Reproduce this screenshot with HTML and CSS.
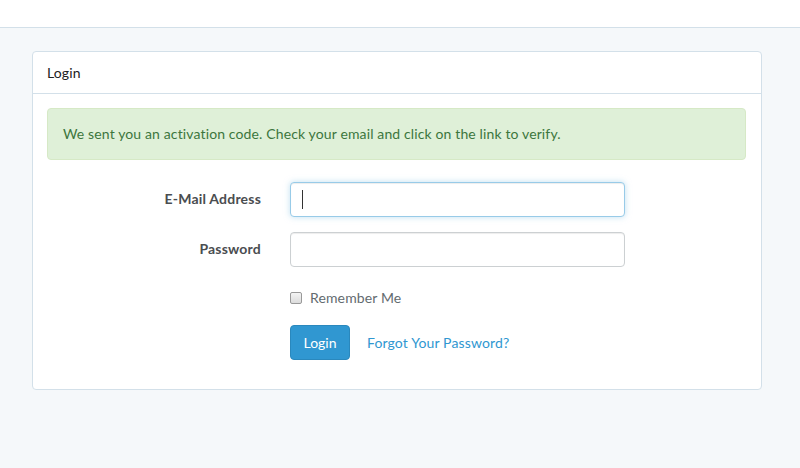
FILE: index.html
```html
<!DOCTYPE html>
<html lang="en">
<head>
<meta charset="utf-8">
<title>Login</title>
<link rel="stylesheet" href="styles.css">
</head>
<body>
<nav class="navbar"></nav>
<main class="container">
  <section class="panel">
    <header class="panel-heading">Login</header>
    <div class="panel-body">
      <div class="alert">We sent you an activation code. Check your email and click on the link to verify.</div>
      <form class="form">
        <div class="form-group">
          <label class="label" for="email">E-Mail Address</label>
          <div class="field">
            <input id="email" class="input input-focus" type="email">
            <span class="caret"></span>
          </div>
        </div>
        <div class="form-group">
          <label class="label" for="password">Password</label>
          <div class="field">
            <input id="password" class="input" type="password">
          </div>
        </div>
        <div class="form-group">
          <span class="label"></span>
          <div class="field check-row">
            <span class="checkbox"></span>
            <span class="check-text">Remember Me</span>
          </div>
        </div>
        <div class="form-group last">
          <span class="label"></span>
          <div class="field actions">
            <button type="button" class="btn">Login</button>
            <a class="link" href="#">Forgot Your Password?</a>
          </div>
        </div>
      </form>
    </div>
  </section>
</main>
</body>
</html>
```
FILE: styles.css
```css
* { box-sizing: border-box; }
html, body {
  margin: 0;
  padding: 0;
  background: #f5f8fa;
  font-family: "Lato", "Open Sans", sans-serif;
  font-size: 14px;
  line-height: 22px;
  letter-spacing: 0.13px;
  color: #636b6f;
}
.navbar {
  height: 28px;
  background: #fff;
  border-bottom: 1px solid #d3e0e9;
}
.container {
  padding: 23px 38px 0 32px;
}
.panel {
  width: 730px;
  background: #fff;
  border: 1px solid #d3e0e9;
  border-radius: 4px;
}
.panel-heading {
  height: 42px;
  padding: 10px 15px 10px 14px;
  color: #222;
  border-bottom: 1px solid #d3e0e9;
}
.panel-body {
  padding: 14px 15px 14px 14px;
}
.alert {
  height: 52px;
  padding: 14px 15px;
  background: #dff0d8;
  border: 1px solid #d6e9c6;
  border-radius: 4px;
  color: #3c763d;
  margin-bottom: 22px;
}
.form-group {
  display: flex;
  align-items: flex-start;
  margin-bottom: 15px;
}
.form-group.last { margin-bottom: 15px; }
.label {
  width: 214px;
  flex: none;
  text-align: right;
  padding-top: 6px;
  font-weight: 700;
  color: #4a4d50;
  letter-spacing: 0.2px;
  margin-right: 29px;
}
.field {
  position: relative;
  width: 335px;
}
.input {
  display: block;
  width: 335px;
  height: 35px;
  margin: 0;
  padding: 6px 12px;
  border: 1px solid #ccd0d2;
  border-radius: 4px;
  background: #fff;
  font: inherit;
  box-shadow: inset 0 1px 1px rgba(0,0,0,.075);
  outline: none;
}
.input-focus {
  border-color: #98cbe8;
  box-shadow: inset 0 1px 1px rgba(0,0,0,.075), 0 0 6px rgba(152,203,232,.6);
}
.caret {
  position: absolute;
  left: 12px;
  top: 8px;
  width: 1px;
  height: 19px;
  background: #333;
}
.check-row {
  display: flex;
  align-items: center;
  height: 28px;
  padding-top: 3px;
}
.checkbox {
  width: 12px;
  height: 12px;
  border: 1px solid #999;
  border-radius: 2px;
  background: linear-gradient(#f4f4f4, #dcdcdc);
  margin-right: 8px;
}
.check-text { color: #636b6f; }
.actions {
  display: flex;
  align-items: center;
}
.btn {
  height: 35px;
  padding: 6px 12px;
  border: 1px solid #2a88bd;
  border-radius: 4px;
  background: #3097d1;
  color: #fff;
  font: inherit;
  width: 60px;
}
.link {
  margin-left: 17px;
  color: #3097d1;
  text-decoration: none;
}
```
